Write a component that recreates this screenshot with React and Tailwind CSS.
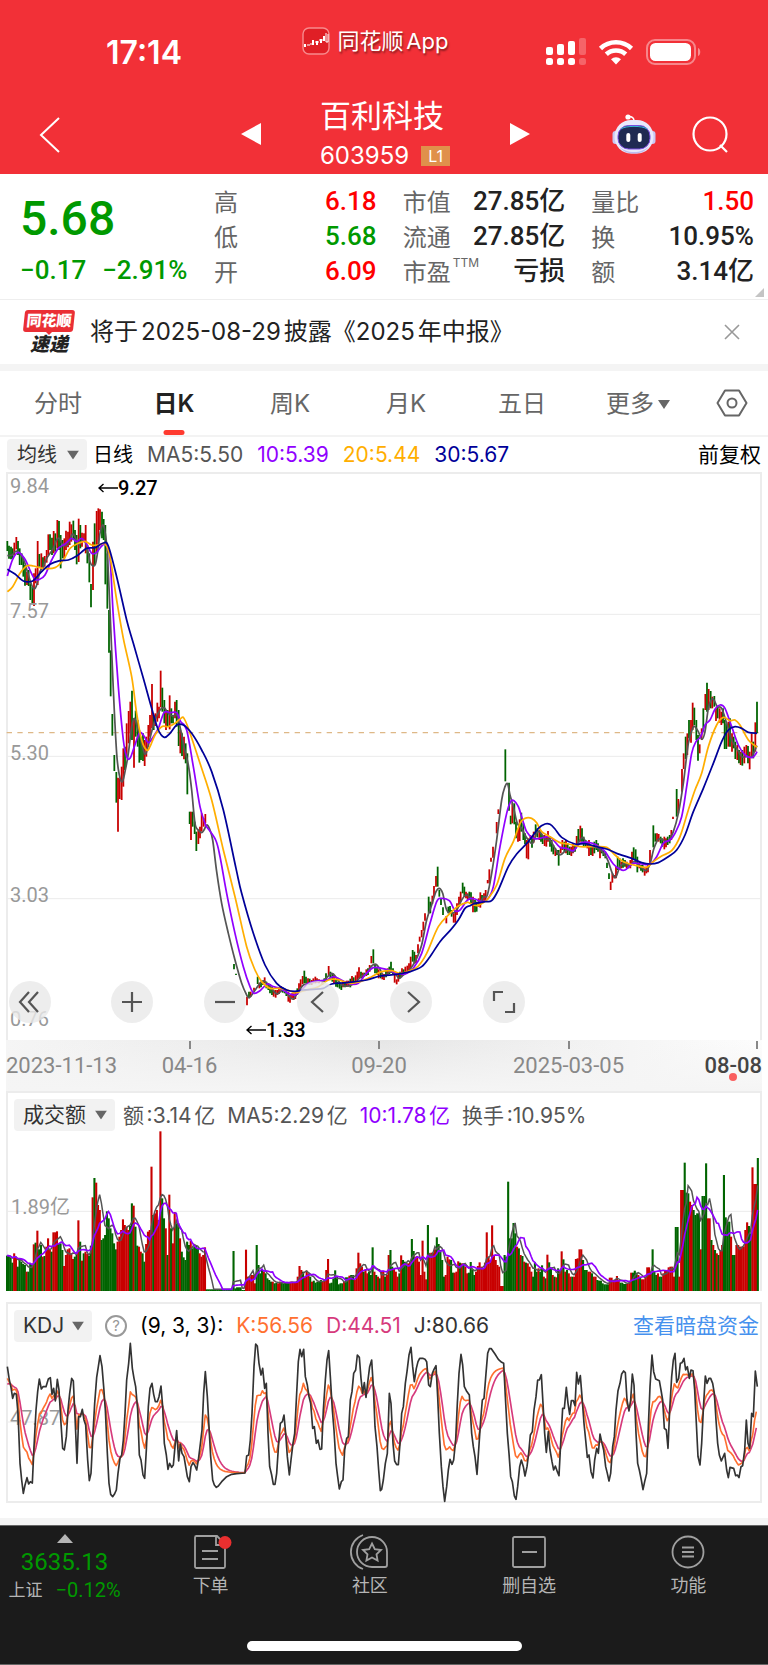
import React, { useMemo, useState } from 'react';
import clsx from 'clsx';

const UI = "font-['Inter','Noto_Sans_CJK_SC',sans-serif]";
const NUM = "font-['Roboto','Noto_Sans_CJK_SC',sans-serif] [text-autospace:no-autospace]";

const UP = '#c80000';
const DOWN = '#006400';

// ---------- chart data ----------
// candles: direction + x, high, low (chart units)
const CANDLES_1 =
  'g22 213 243,g27 227 266,g33 230 268,g38 235 266,r43 218 255,r49 201 238,g54 213 255,g59 235 285,g65 250 285,g70 262 320,g75 285 347,r81 305 345,g86 300 348,g91 340 390,g97 350 400,r102 310 408,r107 295 340,r113 213 345,g118 252 290,r124 250 300,g129 262 295,r134 258 290,r140 240 278,r145 193 255,g150 193 240,g156 203 255,r161 183 250,g166 190 245,r172 150 235,g177 153 240,g182 195 295,g188 210 265,r193 205 265,r198 182 240,r204 185 232,r209 155 225,r214 163 215,g220 152 210,g225 180 240,g230 195 283,r236 146 276,g241 165 235,r246 188 230,r252 190 215,r257 165 250,g262 225 280,g268 250 337,g273 342 412,r279 215 360,g284 160 285,r290 123 250,r295 115 230,r300 118 180,g306 125 205,g311 147 210,g316 165 343,g322 250 416,g327 420 548,g332 541 679,g337 732 797,g343 855 903,g349 906 998,r354 923 1085,r359 925 987,r365 890 990,r370 835 950,g375 830 900,r380 760 860,r386 723 820,r391 695 790,g396 662 810,r402 745 893,g407 722 800,g413 750 830,g418 780 878,g423 800 870,g429 790 873,r434 810 888,r439 800 860,r445 765 830,r450 735 800,r456 642 775,g461 735 780,r466 730 768,r472 698 755,r477 710 745,r482 602 712,g487 653 725,g493 690 760,r498 720 780,g503 720 770,r509 676 778,g514 715 760,g519 735 760,r525 695 745,g530 690 770,g536 720 828,r541 780 850,g546 790 858,r552 800 868,g557 820 880,g562 850 973,g569 1025 1062,r573 1025 1110,g578 1025 1070,g584 1055 1092,g589 1085 1143,r595 1080 1122,r600 1070 1105,r605 1030 1085,r611 1045 1070,r616 1032 1060';
const CANDLES_2 =
  'g162 792 808,g168 821 825,r201 890 916,g207 875 893,r212 875 890,r222 863 872,g233 830 852,r238 848 865,g243 845 862,g249 842 855,r254 832 850,g259 845 865,g265 850 870,g270 852 880,g276 860 885,r281 870 890,r287 870 893,r292 870 885,r297 862 882,r303 858 872,g308 862 878,g314 866 880,g319 872 888,r325 875 905,r330 885 908,r336 880 895,r341 880 900,r346 875 897,g352 865 885,r357 850 875,r362 838 862,r368 828 852,g373 812 850,g378 830 850,r384 835 850,g389 836 854,r395 840 855,r400 835 850,r406 830 850,r411 835 848,r417 838 850,r427 840 855,g433 835 848,g438 820 840,r446 798 825,g451 815 835,g457 820 845,r462 825 850,g468 840 860,g473 845 862,g479 850 866,g484 852 870,r489 845 862,g495 848 862,r500 842 860,r505 842 860,g511 836 862,r516 828 856,g521 832 852,r527 826 850,r532 815 840,r537 802 835,g543 815 835,r548 818 835,g553 818 830,r559 808 828,g564 805 825,r569 795 815,r574 768 790,g580 748 790,g585 795 820,g591 800 825,r596 808 835,g602 815 835,r607 820 838,r612 822 840,g618 812 832,r623 805 825,g628 800 822,g633 785 818,g639 805 822,r644 815 848,r650 838 853,r655 825 845,g660 815 835,r666 805 828,g671 808 822,r676 800 820,r682 797 815,r687 790 810,r692 770 805,g698 750 785,g703 755 790,r708 765 790,r714 733 760,r719 710 725,r725 690 712,r730 665 692,r735 640 662,g746 590 640,g751 605 640,r757 587 612,r762 558 590,r768 528 560,g773 500 560,g778 570 590,g783 595 615,g789 622 645,r799 648 670,g805 620 640,g810 618 640,g815 630 650,r821 640 668,r826 635 668,r831 610 645,r837 590 620,r842 575 605,g848 548 580,g853 560 590,r858 575 595,r863 580 600,g868 575 600';
const CANDLES_3 =
  'g3 757 790,r9 770 817,g15 780 817,g20 785 815,r26 775 800,r31 757 803,g36 765 790,r42 760 785,r47 750 780,r53 720 730,r58 688 730,r63 653 665,r69 620 653,r80 546 580,r85 508 522,g106 328 424,g117 428 512,g122 527 553,r127 490 550,g133 490 553,g138 545 595,r144 565 605,r149 538 603,g154 518 575,g160 550 600,g165 580 612,r170 600 655,r175 595 658,r181 585 600,g186 590 623,r191 575 608,g197 553 585,g202 565 592,r208 570 600,g213 580 605,g218 585 612,r224 585 618,r229 590 620,r234 573 605,g240 590 620,g245 600 635,g250 615 643,r256 625 648,g261 630 645,g266 630 677,r272 620 640,r277 600 630,g283 605 635,r288 600 640,g293 610 645,g299 620 645,r304 620 648,r309 610 640,g315 615 635,r320 588 620,g325 567 610,r331 557 605,g336 565 605,g341 590 620,g347 600 620,r352 605 625,r357 600 648,g363 615 645,r368 615 648,g373 605 640,g379 600 630,g384 610 635,r390 620 655,g395 620 640,g400 630 648,g406 635 655,g411 668 684,g417 700 717,r422 725 750,r427 700 728,r433 705 715,r438 680 715,g443 650 690,g449 655 690,r454 665 685,g459 655 683,g465 660 680,r470 665 685,g475 670 685,r481 660 685,r486 635 670,g491 622 660,g497 628 670,g502 650 697,r508 665 685,g513 675 692,g518 675 697,r524 685 707,r529 680 700,r534 670 697,r540 630 670,g550 556 622,g556 580 605,r561 580 603,r566 582 605,g572 590 610,g577 595 620,r583 590 628,r588 595 622,g593 590 615,g599 585 610,r604 570 600,r609 530 537,g620 447 530,r625 477 520,r636 387 455,r641 340 387,g647 290 357,r652 280 345,g657 240 295,r663 240 308,r668 188 270,g673 203 255,g679 240 300,g684 285 362,r689 313 340,r695 265 300,g700 205 275,r706 162 210,g711 128 215,r716 147 210,g722 153 205,r727 170 205,g733 168 200,r738 205 243,g743 200 235,r749 205 248,r754 215 255,g759 205 250,g764 240 327,g769 250 327,r775 245 320,g780 235 320,r786 280 335,g791 290 325,g796 305 357,r802 315 360,g807 330 370,r812 335 375,g817 330 377,r823 320 370,r829 315 350,g834 318 370,r839 335 388,r845 280 350,g850 305 355,r856 247 335,g861 185 280';

const MA5_1 = '22 257,35 256,45 245,55 245,65 258,75 280,85 315,95 345,103 357,110 345,120 305,130 290,140 265,150 250,160 235,170 210,178 205,185 220,195 228,205 220,215 195,222 195,230 212,238 225,245 212,255 215,262 235,270 275,278 287,286 283,293 245,300 190,308 165,315 185,322 250,330 420,340 660,350 850,358 915,367 935,375 905,385 850,395 770,403 745,410 765,420 800,430 840,437 852,445 825,455 785,465 750,480 720,492 713,505 730,518 738,530 735,540 770,552 830,565 885,575 960,585 1060,595 1080,605 1088,612 1080,620 1065,628 1075';
const MA5_2 = '98 420,110 515,125 610,145 700,165 780,185 850,200 885,208 893,222 875,240 850,252 843,270 858,290 882,310 870,328 890,340 897,352 880,370 855,390 850,410 842,430 842,455 820,470 835,485 855,505 858,525 848,545 828,560 820,575 798,588 793,600 808,612 830,630 815,645 820,657 835,670 825,690 808,710 775,725 735,740 660,755 615,768 575,778 565,788 580,800 630,815 640,830 630,845 600,858 585';
const MA5_3 = '0 772,10 785,20 790,30 785,42 770,52 765,65 700,80 600,95 480,105 440,113 432,120 465,130 500,142 550,155 565,165 585,175 600,188 610,200 580,210 575,225 597,240 600,255 625,270 645,290 630,310 635,325 608,338 592,350 610,365 620,385 625,405 645,415 665,427 700,437 712,450 680,465 670,480 678,492 665,510 678,528 692,540 672,552 625,565 598,580 600,595 603,610 575,625 520,640 430,655 310,668 265,675 260,685 275,696 298,705 275,715 205,725 178,732 180,742 200,755 205,770 250,785 300,800 325,815 350,830 350,845 350,855 330,861 317';
const MA10_1 = '22 318,38 268,55 247,75 268,92 305,105 328,118 328,135 315,155 270,175 235,195 222,215 205,230 215,245 205,260 222,275 250,290 247,305 228,318 225,330 265,340 440,355 650,370 810,380 860,390 865,403 830,418 790,430 795,445 818,460 800,475 775,492 728,510 728,530 728,542 755,560 780,580 890,600 1010,615 1060';
const MA10_2 = '80 380,107 420,120 470,140 580,165 700,190 800,210 860,222 880,240 872,262 852,280 860,300 865,325 880,345 885,365 870,385 850,410 843,440 840,460 830,480 838,510 852,535 850,555 825,580 803,605 805,630 812,655 822,680 820,700 805,725 760,750 670,770 605,783 595,808 602,825 632,840 630,858 605';
const MA10_3 = '0 776,15 777,35 785,52 778,70 740,90 620,110 520,122 485,132 482,145 500,155 530,170 575,190 595,210 595,235 590,250 600,270 622,290 625,310 632,330 610,355 607,380 615,405 635,430 672,450 688,465 690,490 670,515 672,540 672,560 650,580 610,600 600,615 580,635 530,650 440,665 340,678 305,692 290,705 255,720 240,735 208,750 195,765 205,785 260,805 315,825 345,845 353,855 345,861 335';
const MA20_1 = '22 365,38 350,60 310,80 288,100 288,130 295,165 293,190 270,210 235,235 220,255 214,275 225,295 225,315 222,330 260,350 390,370 505,395 620,410 730,425 810,440 840,450 830,465 795,485 770,505 770,525 760,545 743';
const MA20_2 = '12 55,25 85,60 190,95 300,130 450,165 590,200 740,225 810,245 845,270 865,300 865,330 873,350 878,380 870,415 860,445 840,470 838,510 850,540 845,575 830,605 815,635 812,660 820,690 812,715 798,740 760,775 680,810 640,835 618,862 607';
const MA20_3 = '0 790,20 797,40 788,55 775,80 735,105 655,130 605,150 550,165 535,185 535,200 548,215 575,240 590,270 608,295 612,330 620,370 620,410 622,435 645,460 665,500 677,530 682,550 665,575 648,605 632,630 590,655 510,675 450,695 400,715 320,740 255,760 232,780 242,795 240,810 255,835 300,861 322';
const MA30_1 = '22 298,45 312,70 333,98 333,120 310,150 283,180 272,205 270,230 258,260 235,285 233,310 219,325 228,350 320,380 450,400 520,430 625,455 715,475 780,493 802,510 790,530 765,550 765,575 790,605 840,635 905,670 1020,708 1195';
const MA30_2 = '185 580,220 700,255 795,290 850,320 870,345 874,370 870,400 868,430 865,455 852,500 848,560 840,600 828,650 823,690 815,725 800,750 770,780 725,810 692,835 660,855 625';
const MA30_3 = '0 797,15 790,45 785,65 782,85 750,115 680,140 642,175 605,205 565,225 552,240 553,255 567,275 592,315 612,345 611,380 620,410 627,440 640,485 655,515 668,540 672,565 668,595 650,620 630,645 585,670 515,700 445,730 370,755 305,775 270,795 260,815 265,835 277,861 280';

// turnover bars: direction + x, top. A value holds until the next entry
const VOL_1 =
  'g18 497,g27 502,g34 518,r38 490,r44 500,g49 530,g55 510,g60 515,g66 522,g71 525,r77 545,g82 545,g88 520,g93 525,r98 463,g104 458,r109 422,g114 478,g120 465,r125 500,g130 498,r136 470,r141 445,r147 480,g152 485,r157 427,r163 427,r168 424,g174 462,g179 460,g184 480,r190 528,r195 495,r200 478,r206 475,r211 490,r216 507,g222 500,g227 490,r232 391,g238 455,r243 512,g248 490,r254 485,r259 492,g264 498,g270 467,r275 322,g280 264,r286 278,r291 345,r297 360,g303 450,g308 445,g313 435,g318 364,g323 385,g329 415,g334 430,g339 460,g345 478,r350 455,r355 440,r361 420,r366 388,r371 405,r377 410,r382 420,g387 408,g393 340,r398 347,g404 410,g409 467,r414 470,r420 485,g425 490,g430 515,r435 462,r441 425,r447 420,r451 230,g457 375,r462 370,r467 360,r473 390,r478 124,g484 325,g489 385,r495 415,g500 495,r505 314,g510 415,r516 460,r521 366,g526 400,g532 400,r538 445,g543 485,g548 502,g553 510,g559 455,g564 465,r569 453,g575 475,g580 470,g586 468,g591 475,r596 490,r602 500,r607 495,r612 472,g618 598,g697 483,g703 595,g708 592,g724 600,r735 479,r740 560,r750 555,r756 555,r762 580,g767 465,g773 525,g778 550,g783 540,r788 545,g794 550,g799 565,g805 570,g810 575,r816 575,g821 580,g826 578,r832 580,r837 575,g843 578,g848 580,g853 578,r870 575,r880 578,r890 560,r896 528,r902 540,g907 545,r912 560,r917 542,r923 550,g928 560,r933 575,g939 572,g945 578,g950 575,g955 575,g960 570,r966 575,r971 570,r976 540,r981 507,g987 580,g992 578,g997 565,g1003 541,g1008 560,g1013 583,g1019 580,g1024 580,r1030 575,g1035 562,r1045 557,g1051 555,g1056 555,r1062 570,r1067 535,r1072 488,r1078 520,r1083 530,g1088 545,r1094 540,r1100 550,g1105 545,g1110 555,g1115 472,r1121 545,g1126 555,r1131 560,g1137 565';
const VOL_2 =
  'r0 545,r5 542,g12 560,r17 555,r23 495,g28 480,g34 530,r39 535,r44 545,r50 560,g55 550,r61 496,g66 510,g72 515,g77 520,r82 520,r87 515,g93 447,g99 483,r105 500,r110 498,r115 515,r120 555,r125 452,r131 545,r136 568,g141 405,r147 490,r152 488,r157 488,r163 478,g168 442,g174 462,g179 480,g184 510,g189 560,r195 555,r200 500,r205 508,g211 510,g216 548,r222 548,r227 545,r233 514,g238 518,r243 520,g249 520,r254 530,r259 550,g264 548,g270 516,g276 540,g281 555,r286 545,r291 528,r297 517,r303 530,r308 535,r313 518,r318 427,r324 500,r329 510,r334 406,r340 495,r345 510,r350 525,r356 530,r361 588,g371 495,g377 500,g382 275,g388 445,g393 445,g398 399,g404 430,r409 470,g414 475,r420 495,g425 498,r430 515,g436 518,r441 520,r446 530,r451 545,g457 560,g462 517,g468 545,r473 535,g478 545,g484 526,r489 560,g494 565,r500 494,g505 517,g511 535,r516 555,g521 560,r527 562,g532 535,r538 540,r543 484,g549 508,r554 545,g559 540,r564 550,r569 560,g575 560,r580 560,r586 507,r591 505,r597 478,r603 505,g608 510,g613 540,g619 540,r624 545,g630 550,g635 555,r640 560,g646 570,r651 572,g656 572,g662 580,g672 583,r683 570,r688 563,r698 570,r709 558,r715 572,g720 578,g731 582,r741 580,r747 575,r752 548,g757 548,g763 542,g768 548,r773 555,g779 562,r784 568,g790 568,r795 560,r800 532,r806 540,r811 545,g816 478,g822 545,g827 555,r832 550,g838 560,g843 560,r848 550,r854 540,r860 532,r870 530,r876 560,g881 555,g886 411,r892 560,r897 560,r902 300,r908 300,g912 218,g918 308,g923 310,r929 335,r934 345,g939 360,g945 375,g950 370,r956 478,g965 318,g971 318,g976 220,r982 385,g988 450,r994 465,g999 480,r1004 490,g1010 495,r1016 480,r1020 465,r1026 465,g1030 255,g1036 382,g1041 395,r1047 400,r1052 440,g1057 495,g1063 430,r1068 465,r1074 470,g1079 475,r1084 470,r1090 420,r1095 397,g1101 408,g1106 430,r1111 232,r1117 282,r1122 282,g1127 204';

const J_1 = '22 200,28 240,33 262,38 295,43 280,49 283,54 340,60 490,65 540,70 580,75 555,81 533,86 552,91 545,97 549,102 440,108 330,113 275,118 237,124 267,129 260,138 260,145 237,151 233,156 283,161 265,166 303,172 238,177 270,183 370,188 445,193 450,199 410,204 330,209 280,215 235,220 243,225 350,231 490,236 350,241 350,247 328,252 360,257 375,263 480,268 542,273 520,279 400,284 310,290 232,295 200,300 167,306 200,311 260,316 330,322 460,327 550,332 583,338 590,343 583,349 570,354 520,360 475,365 465,370 420,375 340,380 240,386 190,391 130,397 205,402 235,407 260,413 330,418 465,423 480,429 525,434 535,439 450,445 320,450 265,456 250,461 283,466 305,472 305,477 290,483 258,488 320,493 430,499 465,504 508,509 490,515 502,520 495,525 440,530 392,536 483,541 432,546 460,552 470,557 500,562 530,568 545,573 500,579 488,584 495,590 510,595 480,600 440,606 390,611 280,616 215,622 290,627 380,632 470,638 540,643 555,649 562,655 558,665 545,680 530,695 523,710 521,735 519,740 468,746 465,751 420,756 340,762 200,767 132,772 138,777 190,783 225,788 205,794 265,799 250,804 400,809 500,815 525,820 553,825 553,830 520,836 430,841 370,847 365,852 345,857 400,862 470,868 525,873 480,879 430,884 400,890 280,895 185,900 148,905 170,911 148,916 230,922 255,927 290,932 310,938 385,943 380,949 430,954 420,960 448,965 447,970 330,976 240,981 180,986 152,991 230,997 330,1002 390,1008 490,1013 530,1018 567,1024 545,1029 540,1034 450,1040 415,1045 410,1051 300,1056 275,1061 220,1067 210,1072 165,1078 172,1083 235,1088 280,1093 248,1098 292,1104 240,1109 200,1115 180,1120 260,1125 380,1131 440,1136 510,1141 572';
const J_2 = '5 568,10 540,16 490,22 460,28 280,33 310,39 430,44 483,50 494,55 494,60 430,65 340,70 320,76 250,81 215,87 165,93 142,98 200,103 245,109 205,114 185,119 175,128 175,135 178,140 185,146 255,151 260,157 220,162 208,168 197,173 290,178 400,184 500,189 560,194 604,200 560,205 510,210 478,216 493,221 480,227 420,232 310,237 220,243 163,248 195,253 260,259 272,268 285,275 400,280 440,285 470,291 523,296 450,302 360,307 300,312 295,318 220,323 160,328 146,334 146,345 162,355 178,365 187,371 190,376 290,382 400,387 460,392 530,397 545,403 588,408 598,413 560,419 500,424 480,430 500,435 528,441 500,446 460,451 405,457 395,462 330,468 290,473 240,478 240,484 224,489 310,494 400,499 457,505 395,510 450,516 485,521 510,526 498,532 515,537 527,542 430,548 325,553 325,559 262,564 310,569 343,574 302,580 302,585 317,590 217,595 252,601 227,606 290,612 370,617 420,622 472,627 465,633 515,639 534,644 480,650 445,655 460,660 402,666 430,671 450,677 500,682 520,687 543,692 520,698 440,703 410,708 330,714 272,720 250,725 222,731 213,736 218,741 300,747 333,752 300,757 222,762 255,768 400,773 490,778 510,784 540,789 569,794 545,800 520,805 380,810 260,816 165,821 215,827 237,838 242,843 270,848 300,853 385,859 390,864 445,869 330,875 230,880 180,885 160,890 247,896 235,901 190,906 188,912 175,917 210,922 200,928 235,933 210,939 212,944 270,949 370,954 470,960 495,965 430,971 310,976 228,981 250,987 235,992 235,998 250,1003 280,1008 360,1013 430,1018 465,1024 483,1034 460,1040 510,1045 533,1050 502,1061 505,1067 527,1072 525,1077 533,1083 500,1088 497,1094 450,1099 360,1104 430,1109 445,1115 340,1120 350,1126 213,1132 260';

const PITCH = 5.35;

// ---------- helpers ----------
const parse = (str, dx = 0, dy = 0) =>
  str.split(',').map((item) => {
    const hasDir = /^[rg]/.test(item);
    const [x, ...ys] = (hasDir ? item.slice(1) : item).split(' ').map(Number);
    return { up: item[0] === 'r', x: x + dx, y: ys[0] + dy, low: (ys[1] ?? 0) + dy };
  });

const join = (a, b, c) => [...parse(a), ...parse(b, 540, 690), ...parse(c, 1410, 510)];

const linePath = (pts) => pts.map((p, i) => `${i ? 'L' : 'M'}${p.x.toFixed(1)} ${p.y.toFixed(1)}`).join('');

const smoothPath = (pts) => {
  let d = `M${pts[0].x} ${pts[0].y}`;
  for (let i = 0; i < pts.length - 1; i++) {
    const a = pts[i - 1] || pts[i];
    const b = pts[i];
    const c = pts[i + 1];
    const e = pts[i + 2] || c;
    d += `C${(b.x + (c.x - a.x) / 6).toFixed(1)} ${(b.y + (c.y - a.y) / 6).toFixed(1)} ${(c.x - (e.x - b.x) / 6).toFixed(1)} ${(c.y - (e.y - b.y) / 6).toFixed(1)} ${c.x} ${c.y}`;
  }
  return d;
};

const movingAverage = (bars, n) =>
  bars.map((bar, i) => {
    const win = bars.slice(Math.max(0, i - n + 1), i + 1);
    return { x: bar.x + PITCH / 2, y: win.reduce((s, b) => s + b.y, 0) / win.length };
  });

const fillBars = (keys) => {
  const bars = [];
  let k = 0;
  for (let x = keys[0].x; x < 2272; x += PITCH) {
    while (k < keys.length - 1 && keys[k + 1].x <= x + 2) k++;
    bars.push({ up: keys[k].up, x, y: keys[k].y });
  }
  return bars;
};

// K and D follow from J = 3K - 2D with the usual 1/3 smoothing
const buildKdj = (keys) => {
  const j = [];
  let k = 0;
  for (let x = keys[0].x; x <= keys[keys.length - 1].x; x += PITCH) {
    while (k < keys.length - 2 && keys[k + 1].x < x) k++;
    const a = keys[k];
    const b = keys[k + 1];
    j.push({ x, y: a.y + ((b.y - a.y) * (x - a.x)) / (b.x - a.x) });
  }
  let prev = 262;
  const d = j.map((p) => {
    prev = (6 * prev + p.y) / 7;
    return { x: p.x, y: prev };
  });
  return { d, k: j.map((p, i) => ({ x: p.x, y: (p.y + 2 * d[i].y) / 3 })) };
};

// ---------- small pieces ----------
const Caret = ({ className }) => (
  <svg viewBox="0 0 12 9" className={clsx('h-[9px] w-[12px]', className)} fill="#666">
    <path d="M0 0h12L6 9z" />
  </svg>
);

const Picker = ({ label, options, className }) => (
  <div className="relative">
    <select
      aria-label={label}
      className={clsx('block appearance-none rounded bg-[#f2f2f2] text-[#333] outline-none', className)}
    >
      {options.map((o) => (
        <option key={o}>{o}</option>
      ))}
    </select>
    <Caret className="pointer-events-none absolute right-2 top-1/2 -translate-y-1/2" />
  </div>
);

const StatusBar = () => (
  <div className="grid h-[90px] grid-cols-[1fr_auto_1fr] items-start pr-[18px] text-white">
    <div className="pl-[106px] pt-[33px]">
      <span className="block text-[32px] font-semibold leading-10">17:14</span>
    </div>
    <div className="flex items-center gap-2 pt-[25px]">
      <svg viewBox="0 0 28 28" className="h-7 w-7" fill="none">
        <rect x="1" y="1" width="26" height="26" rx="6" fill="#e01f26" stroke="#f78a8d" strokeWidth="1.4" />
        <path d="M3 17v3M11 13v5M15 14v4M19 12v4M22 9v5" stroke="#fff" strokeWidth="2" />
        <path d="M5 18h3M8 17h3M13 15h4M17 13h4M24 6v9h2V7" stroke="#fff" strokeWidth="1" />
      </svg>
      <span className="whitespace-nowrap text-[22px] leading-8 [text-shadow:1px_2px_2px_rgba(0,0,0,0.45)]">同花顺App</span>
    </div>
    <div className="flex items-center justify-end gap-3 pr-12 pt-[38px]">
      <svg viewBox="0 0 40 28" className="h-7 w-10" fill="#fff">
        <rect x="0" y="9" width="7" height="8" rx="2" />
        <rect x="11" y="6" width="7" height="11" rx="2" />
        <rect x="22" y="3" width="7" height="14" rx="2" />
        <rect x="33" y="0" width="7" height="17" rx="2" opacity=".25" />
        <rect x="0" y="20" width="7" height="7" rx="2.5" />
        <rect x="11" y="20" width="7" height="7" rx="2.5" />
        <rect x="22" y="20" width="7" height="7" rx="2.5" />
        <rect x="33" y="20" width="7" height="7" rx="2.5" opacity=".25" />
      </svg>
      <svg viewBox="0 0 36 28" className="h-7 w-9" fill="none" stroke="#fff" strokeWidth="4.6">
        <path d="M2.5 10.5a22.5 22.5 0 0 1 31 0" />
        <path d="M8.3 16.3a14.2 14.2 0 0 1 19.4 0" />
        <path d="M18 26.5l-5-5.2a7.2 7.2 0 0 1 10 0z" fill="#fff" stroke="none" />
      </svg>
      <svg viewBox="0 0 56 26" className="h-[26px] w-14" fill="none">
        <rect x="1" y="1" width="48" height="24" rx="8" stroke="#fff" strokeOpacity=".42" strokeWidth="2" />
        <rect x="4" y="4" width="41" height="18" rx="5.5" fill="#fff" />
        <path d="M52 9c3 1 3 7 0 8z" fill="#fff" fillOpacity=".45" />
      </svg>
    </div>
  </div>
);

const Robot = () => (
  <svg viewBox="0 0 44 40" className="h-10 w-11" fill="none">
    <path d="M22 7c0-3-2-4.500-5-4.500" stroke="#fff" strokeWidth="1.600" />
    <circle cx="16" cy="3" r="2.600" fill="#fff" />
    <rect x="0.500" y="17" width="6" height="13" rx="3" fill="#c9c8f4" />
    <rect x="37.500" y="17" width="6" height="13" rx="3" fill="#c9c8f4" />
    <rect x="2.500" y="6" width="39" height="33.500" rx="16.500" fill="#e9e9fb" />
    <path d="M7 32c7 8 23 8 30 0-3 5-8 7.500-15 7.500S10 37 7 32z" fill="#bdbcf0" />
    <rect x="6" y="11.500" width="32" height="23.500" rx="10.500" fill="#1f2a52" stroke="#7b4be0" strokeWidth="1" />
    <path d="M9 15c4-3.500 22-3.500 26 0" stroke="#38b7d8" strokeWidth="1" />
    <rect x="14.300" y="19" width="4" height="9" rx="2" fill="#fff" />
    <rect x="25.700" y="19" width="4" height="9" rx="2" fill="#fff" />
  </svg>
);

const NavBar = () => (
  <div className="grid h-[84px] grid-cols-[1fr_292px_1fr] text-white">
    <div className="flex items-start pl-[39px] pt-[26px]">
      <button type="button" aria-label="返回">
        <svg viewBox="0 0 22 38" className="block h-[38px] w-[22px]" fill="none" stroke="#fff" strokeWidth="2">
          <path d="M20 2L2 19l18 17" />
        </svg>
      </button>
    </div>
    <div className="flex items-start justify-between pl-0.5">
      <button type="button" aria-label="上一只" className="pt-8">
        <svg viewBox="0 0 21 24" className="block h-6 w-[21px]" fill="#fff">
          <path d="M21 1v22L1 12z" />
        </svg>
      </button>
      <div className="flex flex-col pt-2">
        <h1 className="text-[31px] leading-9">百利科技</h1>
        <div className="mt-[10px] flex items-center gap-3">
          <span className="text-[24px] leading-6">603959</span>
          <span className="bg-[#e0904b] px-[7px] text-[16px] leading-5">L1</span>
        </div>
      </div>
      <button type="button" aria-label="下一只" className="pt-8">
        <svg viewBox="0 0 21 24" className="block h-6 w-[21px]" fill="#fff">
          <path d="M1 1v22l20-11z" />
        </svg>
      </button>
    </div>
    <div className="flex items-start justify-end gap-9 pr-[39px]">
      <button type="button" aria-label="智能助手" className="pt-6">
        <Robot />
      </button>
      <button type="button" aria-label="搜索" className="pt-[26px]">
        <svg viewBox="0 0 37 37" className="block h-[37px] w-[37px]" fill="none" stroke="#fff" strokeWidth="2.200">
          <circle cx="18" cy="18" r="16.500" />
          <path d="M28 29l7 7" />
        </svg>
      </button>
    </div>
  </div>
);

const GROUPS = [
  [['高', '6.18', 'r'], ['低', '5.68', 'g'], ['开', '6.09', 'r']],
  [['市值', '27.85亿'], ['流通', '27.85亿'], ['市盈', '亏损']],
  [['量比', '1.50', 'r'], ['换', '10.95%'], ['额', '3.14亿']],
];

const Quote = () => (
  <section className="relative grid h-[126px] grid-cols-[168px_1fr_1fr_1fr] gap-x-[26px] border-b border-[#eee] pl-5 pr-[14px] pt-[10px]">
    <div className={clsx(NUM, 'text-[#009900]')}>
      <div className="h-[70px] text-[48px] font-medium leading-[70px]">5.68</div>
      <div className="flex h-[35px] gap-4 whitespace-nowrap text-[26px] font-medium leading-[33px]">
        <span>−0.17</span>
        <span>−2.91%</span>
      </div>
    </div>
    {GROUPS.map((rows) => (
      <dl key={rows[0][0]}>
        {rows.map(([label, value, tone]) => (
          <div key={label} className="flex h-[35px] items-center justify-between whitespace-nowrap">
            <dt className="flex pt-0.5 text-[24px] text-[#666]">
              {label}
              {label === '市盈' && <sup className="top-0 ml-0.5 mt-0.5 text-[12px] leading-3">TTM</sup>}
            </dt>
            <dd
              className={clsx(
                NUM,
                'text-[26px] font-medium leading-[35px]',
                tone === 'r' ? 'text-[#ff0000]' : tone === 'g' ? 'text-[#009900]' : 'text-[#222]'
              )}
            >
              {value}
            </dd>
          </div>
        ))}
      </dl>
    ))}
    <svg viewBox="0 0 9 9" className="absolute bottom-0.5 right-1 h-[9px] w-[9px]" fill="#c4c4c4">
      <path d="M9 0v9H0z" />
    </svg>
  </section>
);

const Notice = ({ onClose }) => (
  <section className="flex h-[64px] items-center pl-[22px] pr-7">
    <div className="flex w-[54px] flex-col items-center italic">
      <div className="w-[50px] -skew-x-6 rounded-[3px] bg-[#ea2f35] text-center text-[15px] font-black not-italic leading-[22px] text-white">同花顺</div>
      <svg viewBox="0 0 6 3" className="h-[3px] w-[6px]" fill="#ea2f35">
        <path d="M0 0h6L3 3z" />
      </svg>
      <div className="text-[19px] font-black leading-[19px] text-[#222]">速递</div>
    </div>
    <p className="ml-[14px] flex-1 whitespace-nowrap text-[24px] text-[#222]">将于2025-08-29披露《2025年中报》</p>
    <button type="button" aria-label="关闭" onClick={onClose}>
      <svg viewBox="0 0 16 16" className="block h-4 w-4" fill="none" stroke="#999" strokeWidth="1.600">
        <path d="M1 1l14 14M15 1L1 15" />
      </svg>
    </button>
  </section>
);

const TABS = ['分时', '日K', '周K', '月K', '五日', '更多'];

const Tabs = ({ active, onChange }) => (
  <nav className="grid h-[66px] grid-cols-[repeat(6,1fr)_72px] border-b-2 border-[#f3f3f3] text-[24px] text-[#666] [text-autospace:no-autospace]">
    {TABS.map((tab) => (
      <button
        type="button"
        key={tab}
        onClick={() => onChange(tab)}
        className={clsx('relative flex items-center justify-center gap-1 pt-0.5', active === tab && 'font-semibold text-[#222]')}
      >
        {tab}
        {tab === '更多' && <Caret />}
        {active === tab && <span className="absolute bottom-0 left-1/2 h-[5px] w-[21px] -translate-x-1/2 rounded-sm bg-[#ff3b30]" />}
      </button>
    ))}
    <button type="button" aria-label="设置" className="flex items-center justify-center">
      <svg viewBox="0 0 32 28" className="h-7 w-8" fill="none" stroke="#666" strokeWidth="2">
        <path d="M9 1.500h14L30.500 14 23 26.500H9L1.500 14z" strokeLinejoin="round" />
        <circle cx="16" cy="14" r="4.500" />
      </svg>
    </button>
  </nav>
);

const PRICE_LABELS = [
  ['9.84', 'top-[2px]'],
  ['7.57', 'top-[127px]'],
  ['5.30', 'top-[269px]'],
  ['3.03', 'top-[411px]'],
  ['0.76', 'top-[535px]'],
];

const TOOLS = [
  ['最早', 'M20 11l-9 10 9 10M29 11l-9 10 9 10'],
  ['放大', 'M11 21h20M21 11v20'],
  ['缩小', 'M11 21h20'],
  ['左移', 'M26 11L15 21l11 10'],
  ['右移', 'M18 11l11 10-11 10'],
  ['全屏', 'M11 20v-9h9M31 22v9h-9'],
];

const Arrow = () => (
  <svg viewBox="0 0 20 10" className="h-[10px] w-5" fill="none" stroke="#000" strokeWidth="1.400">
    <path d="M20 5H1M5.500 1L1 5l4.500 4" />
  </svg>
);

const PriceChart = () => {
  const candles = useMemo(() => join(CANDLES_1, CANDLES_2, CANDLES_3), []);
  const lines = [
    ['#555555', join(MA5_1, MA5_2, MA5_3)],
    ['#9000ff', join(MA10_1, MA10_2, MA10_3)],
    ['#ffae00', join(MA20_1, MA20_2, MA20_3)],
    ['#000099', join(MA30_1, MA30_2, MA30_3)],
  ];

  return (
    <div className="relative mx-[6px] h-[568px] border-2 border-b-0 border-[#ececec]">
      <svg viewBox="24 12 2256 1698" preserveAspectRatio="none" className="absolute inset-0 h-full w-full overflow-visible" fill="none">
        <path d="M20 433H2284M20 859H2284M20 1286H2284" stroke="#ebebeb" strokeWidth="3" />
        <path d="M20 788H2284" stroke="#deb887" strokeWidth="4" strokeDasharray="16 16" />
        {candles.map((c) => (
          <path key={c.x} d={`M${c.x} ${c.y}V${c.low}`} stroke={c.up ? UP : DOWN} strokeWidth="5.350" />
        ))}
        {lines.map(([color, pts]) => (
          <path key={color} d={smoothPath(pts)} stroke={color} strokeWidth="5.200" />
        ))}
      </svg>
      {PRICE_LABELS.map(([text, top]) => (
        <span key={text} className={clsx(NUM, 'absolute left-[2px] text-[20px] leading-5 text-[#999]', top)}>
          {text}
        </span>
      ))}
      <div className={clsx(NUM, 'absolute left-[90px] top-[4px] flex items-center text-[20px] font-medium leading-5 text-black')}>
        <Arrow />
        9.27
      </div>
      <div className={clsx(NUM, 'absolute bottom-0 left-[238px] flex items-center text-[20px] font-medium leading-5 text-black')}>
        <Arrow />
        1.33
      </div>
      <div className="absolute bottom-[17px] left-px flex gap-[51px]">
        {TOOLS.map(([label, d], i) => (
          <button
            type="button"
            key={label}
            aria-label={label}
            className={clsx('h-[42px] w-[42px] rounded-full bg-[#e9e9e9]/80', i === 0 && 'mr-[9px]')}
          >
            <svg viewBox="0 0 42 42" className="block h-[42px] w-[42px]" fill="none" stroke="#555" strokeWidth="2.200">
              <path d={d} />
            </svg>
          </button>
        ))}
      </div>
    </div>
  );
};

const DATES = ['04-16', '09-20', '2025-03-05'];

const DateAxis = () => (
  <div className="relative h-[51px]">
    <div className="absolute inset-x-[6px] inset-y-0 -z-10 bg-linear-to-r from-[#f5f5f5] via-[#e6e6e6] to-[#fdfdfd]">
      <div className="h-full bg-linear-to-b from-transparent to-[#f5f5f5]" />
    </div>
    <div className={clsx(NUM, 'grid h-full grid-cols-[1fr_2fr_2fr_2fr_1fr] whitespace-nowrap pr-[10px] text-[22px] text-[#888]')}>
      <span className="w-0 pl-[6px] pt-[15px] leading-[22px]">2023-11-13</span>
      {DATES.map((date) => (
        <span key={date} className="flex flex-col items-center leading-[22px]">
          <i className="mb-[6px] mt-px block h-2 w-[2px] bg-[#888]" />
          {date}
        </span>
      ))}
      <span className="relative flex flex-col items-end leading-[22px] text-[#444]">
        <i className="mb-[6px] mt-px block h-2 w-[2px] bg-[#888]" />
        <b className="-mr-1 font-medium">08-08</b>
        <i className="-mt-1 mr-[21px] block h-2 w-2 rounded-full bg-[#fa5f5f]" />
      </span>
    </div>
  </div>
);

const VolumeChart = () => {
  const bars = useMemo(() => fillBars([...parse(VOL_1), ...parse(VOL_2, 1140)]), []);
  return (
    <section className="relative mx-[6px] h-[200px] border-2 border-b-0 border-[#ececec]">
      <svg viewBox="24 9 2256 594" preserveAspectRatio="none" className="absolute inset-0 h-full w-full overflow-visible" fill="none">
        <path d="M20 364H2284" stroke="#ebebeb" strokeWidth="3" />
        {bars.map((b) => (
          <rect key={b.x} x={b.x} y={b.y} width="6.300" height={603 - b.y} fill={b.up ? UP : DOWN} />
        ))}
        <path d={linePath(movingAverage(bars, 5))} stroke="#555" strokeWidth="4.500" />
        <path d={linePath(movingAverage(bars, 10))} stroke="#9000ff" strokeWidth="5" />
      </svg>
      <div className="relative flex items-center gap-3 whitespace-nowrap pl-[6px] pt-[5px] text-[21px] leading-8 text-[#555]">
        <Picker label="副图指标" options={['成交额', '成交量']} className="h-8 w-[101px] pl-[9px] text-[21px]" />
        <span className="-ml-1 pt-0.5">额:3.14亿</span>
        <span className="pt-0.5">MA5:2.29亿</span>
        <span className="pt-0.5 text-[#9000ff]">10:1.78亿</span>
        <span className="pt-0.5">换手:10.95%</span>
      </div>
      <span className={clsx(NUM, 'absolute left-[3px] top-[104px] text-[20px] leading-5 text-[#999]')}>1.89亿</span>
    </section>
  );
};

const KdjChart = () => {
  const j = useMemo(() => [...parse(J_1), ...parse(J_2, 1140)], []);
  const { k, d } = useMemo(() => buildKdj(j), [j]);
  return (
    <section className="relative mx-[6px] mt-[11px] h-[201px] border-2 border-[#ececec]">
      <svg viewBox="24 12 2256 591" preserveAspectRatio="none" className="absolute inset-0 h-full w-full" fill="none">
        <path d="M20 366H2290" stroke="#ebebeb" strokeWidth="3" />
      </svg>
      <span className={clsx(NUM, 'absolute left-[2px] top-[104px] text-[20px] leading-5 text-[#999]')}>47.87</span>
      <svg viewBox="24 12 2256 591" preserveAspectRatio="none" className="absolute inset-0 h-full w-full overflow-visible" fill="none" strokeLinejoin="round">
        <path d={linePath(d)} stroke="#d63a7c" strokeWidth="5" />
        <path d={linePath(k)} stroke="#ff7030" strokeWidth="5" />
        <path d={linePath(j)} stroke="#333" strokeWidth="5" />
      </svg>
      <div className="relative flex items-center gap-[13px] whitespace-nowrap pl-[6px] pr-px pt-[6px] text-[21px]">
        <Picker label="副图指标" options={['KDJ', 'MACD', 'RSI']} className="h-8 w-[78px] pl-[9px] text-[21px]" />
        <button type="button" aria-label="指标说明" className="h-[22px] w-[22px] rounded-full border-2 border-[#999] text-center text-[15px] leading-[18px] text-[#999]">
          ?
        </button>
        <span className="text-black">(9, 3, 3):</span>
        <span className="text-[#ff7030]">K:56.56</span>
        <span className="text-[#d63a7c]">D:44.51</span>
        <span className="text-[#333]">J:80.66</span>
        <a href="#" className="ml-auto text-[#4691ee]">查看暗盘资金</a>
      </div>
    </section>
  );
};

const FOOT = [
  [
    '下单',
    <>
      <path d="M2 3.500A1.500 1.500 0 0 1 3.500 2H24l8 8v22.500a1.500 1.500 0 0 1-1.500 1.500h-27A1.500 1.500 0 0 1 2 32.500zM23 2v9h9M9 17h16M9 25h16" />
      <circle cx="32" cy="8.500" r="6.500" fill="#ea2f2f" stroke="none" />
    </>,
  ],
  [
    '社区',
    <>
      <path d="M11 1A18 18 0 0 0 11 35" />
      <path d="M20 3a15 15 0 1 0 0 30h13a2 2 0 0 0 2-2V18A15 15 0 0 0 20 3z" />
      <path d="M20 9.500l2.800 5.700 6.200.8-4.500 4.300 1.100 6.200-5.600-3-5.600 3 1.100-6.200-4.500-4.300 6.200-.8z" />
    </>,
  ],
  ['删自选', <path d="M3.500 3h29a1.500 1.500 0 0 1 1.500 1.500v27a1.500 1.500 0 0 1-1.500 1.500h-29A1.500 1.500 0 0 1 2 31.500v-27A1.500 1.500 0 0 1 3.500 3zM11 18h15" />],
  [
    '功能',
    <>
      <circle cx="18" cy="18" r="15.500" />
      <path d="M12 13.500h12M12 18h12M12 22.500h12" />
    </>,
  ],
];

const Footer = () => (
  <footer className="border-y border-[#666] bg-[#1b1b1b]">
    <div className="grid h-[115px] grid-cols-[131px_repeat(4,1fr)]">
      <a href="#" className={clsx(NUM, 'flex flex-col items-center pr-0.5 pt-2 text-[#009900]')}>
        <svg viewBox="0 0 16 9" className="h-[9px] w-4" fill="#b5b5b5">
          <path d="M8 0l8 9H0z" />
        </svg>
        <span className="mt-[3px] text-[24px] leading-8">3635.13</span>
        <span className="flex items-center gap-[13px] whitespace-nowrap text-[20px] leading-6">
          <span className="text-[17px] text-[#b5b5b5]">上证</span>−0.12%
        </span>
      </a>
      {FOOT.map(([label, icon]) => (
        <button type="button" key={label} className="flex flex-col items-center pt-2 text-[18px] text-[#b5b5b5]">
          <svg viewBox="0 0 36 36" className="h-9 w-9 overflow-visible" fill="none" stroke="#a0a0a0" strokeWidth="1.800">
            {icon}
          </svg>
          <span className="mt-1 leading-6">{label}</span>
        </button>
      ))}
    </div>
    <div className="mx-auto mb-[13px] h-[10px] w-[275px] rounded-full bg-white" />
  </footer>
);

export default function App() {
  const [tab, setTab] = useState('日K');
  const [noticeOpen, setNoticeOpen] = useState(true);

  return (
    <div className={clsx(UI, 'isolate w-full overflow-hidden bg-white [text-autospace:normal]')} lang="zh-CN">
      <header className="bg-[#f23037]">
        <StatusBar />
        <NavBar />
      </header>
      <Quote />
      {noticeOpen && <Notice onClose={() => setNoticeOpen(false)} />}
      <div className="h-[7px] bg-[#f4f4f4]" />
      <Tabs active={tab} onChange={setTab} />
      <div className="flex h-[35px] items-center gap-[14px] whitespace-nowrap px-[7px] text-[21px] text-black">
        <Picker label="主图指标" options={['均线', 'BOLL']} className="h-[31px] w-[80px] pl-[10px] text-[20px]" />
        <span className="-ml-2 text-[20px]">日线</span>
        <span className="text-[#555]">MA5:5.50</span>
        <span className="text-[#9000ff]">10:5.39</span>
        <span className="text-[#ffae00]">20:5.44</span>
        <span className="text-[#000099]">30:5.67</span>
        <span className="ml-auto">前复权</span>
      </div>
      <PriceChart />
      <DateAxis />
      <VolumeChart />
      <KdjChart />
      <div className="mt-[15px] h-[7px] bg-[#f4f4f4]" />
      <Footer />
    </div>
  );
}
